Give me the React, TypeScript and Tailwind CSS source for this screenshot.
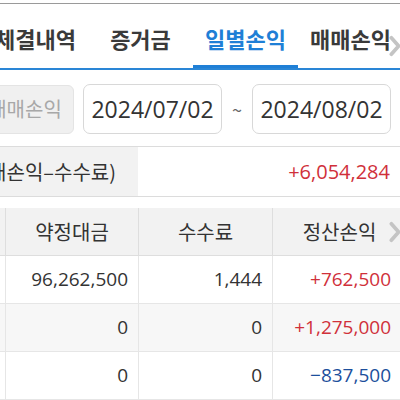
import React from 'react';

const KR = "font-['Noto_Sans_CJK_KR',sans-serif]";
const NUM = "font-['Open_Sans','Noto_Sans_CJK_KR',sans-serif]";

function Chevron({ className }: { className: string }) {
  return (
    <svg viewBox="0 0 14 24" className={className} fill="none">
      <path d="M3 3 L11 12 L3 21" stroke="#c4c4c4" strokeWidth="4" strokeLinecap="round" strokeLinejoin="round" />
    </svg>
  );
}

const tabs = ['체결내역', '증거금', '일별손익', '매매손익'];

const rows = [
  { amount: '96,262,500', fee: '1,444', pnl: '+762,500', up: true },
  { amount: '0', fee: '0', pnl: '+1,275,000', up: true },
  { amount: '0', fee: '0', pnl: '−837,500', up: false },
];

export default function App() {
  return (
    <div className={`relative w-[400px] h-[400px] overflow-hidden bg-white text-[#333] ${KR}`}>
      <div className="h-[3px]" />
      <div className="h-px bg-[#9a9a9a]" />

      {/* tabs */}
      <div className="relative border-b-2 border-[#2a86d6]">
        <div className="flex ml-[-17px] h-[64px]">
          {tabs.map((t, i) => (
            <div
              key={t}
              className={`w-[105px] shrink-0 flex items-center justify-center text-[22px] font-semibold whitespace-nowrap pt-[8px] ${
                i === 2 ? 'text-[#1f7fd6] border-b-[3px] border-[#1f7fd6]' : 'text-[#3a3a3a] border-b-[3px] border-transparent'
              }`}
            >
              {t}
            </div>
          ))}
        </div>
        <Chevron className="absolute right-[-2px] top-[31px] w-[14px] h-[22px]" />
      </div>

      {/* date range */}
      <div className="flex items-center h-[76px] pt-[2px]">
        <div className="ml-[-24px] w-[98px] h-[49px] shrink-0 rounded-[6px] bg-[#f0f0f0] border border-[#e4e4e4] flex items-center justify-center text-[20px] text-[#a8a8a8] whitespace-nowrap">
          매매손익
        </div>
        <div className={`ml-[9px] w-[139px] h-[50px] shrink-0 rounded-[7px] border border-[#d8d8d8] flex items-center justify-center text-[23px] text-[#333] ${NUM}`}>
          2024/07/02
        </div>
        <div className="w-[30px] shrink-0 text-center text-[18px] text-[#666]">~</div>
        <div className={`w-[139px] h-[50px] shrink-0 rounded-[7px] border border-[#d8d8d8] flex items-center justify-center text-[23px] text-[#333] ${NUM}`}>
          2024/08/02
        </div>
      </div>

      {/* summary */}
      <div className="flex h-[51px] border-y border-[#dcdcdc]">
        <div className="w-[138px] shrink-0 bg-[#f2f2f2] flex items-center justify-end pr-[22px] text-[20px] whitespace-nowrap overflow-hidden">
          정산손익(매매손익–수수료)
        </div>
        <div className={`flex-1 flex items-center justify-end pr-[10px] text-[20px] text-[#d0303a] ${NUM}`}>
          +6,054,284
        </div>
      </div>

      {/* table */}
      <div className="mt-[11px] relative">
        <div className="flex h-[48px] bg-[#f2f2f2] border-b border-[#dedede] text-[20px]">
          <div className="w-[6px] shrink-0 border-r border-[#dedede]" />
          <div className="w-[133px] shrink-0 border-r border-[#dedede] flex items-center justify-center">약정대금</div>
          <div className="w-[134px] shrink-0 border-r border-[#dedede] flex items-center justify-center">수수료</div>
          <div className="w-[133px] shrink-0 flex items-center justify-center">정산손익</div>
        </div>
        <Chevron className="absolute right-[-2px] top-[13px] w-[14px] h-[22px]" />
        {rows.map((r, i) => (
          <div
            key={i}
            className={`flex h-[48px] border-b border-[#e6e6e6] text-[19px] ${NUM} ${i === 1 ? 'bg-[#f7f7f7]' : 'bg-white'}`}
          >
            <div className="w-[6px] shrink-0 border-r border-[#e6e6e6]" />
            <div className="w-[133px] shrink-0 border-r border-[#e6e6e6] flex items-center justify-end pr-[10px]">{r.amount}</div>
            <div className="w-[134px] shrink-0 border-r border-[#e6e6e6] flex items-center justify-end pr-[10px]">{r.fee}</div>
            <div className={`w-[128px] shrink-0 flex items-center justify-end pr-[10px] ${r.up ? 'text-[#d0303a]' : 'text-[#1d4f9c]'}`}>
              {r.pnl}
            </div>
          </div>
        ))}
      </div>
    </div>
  );
}
